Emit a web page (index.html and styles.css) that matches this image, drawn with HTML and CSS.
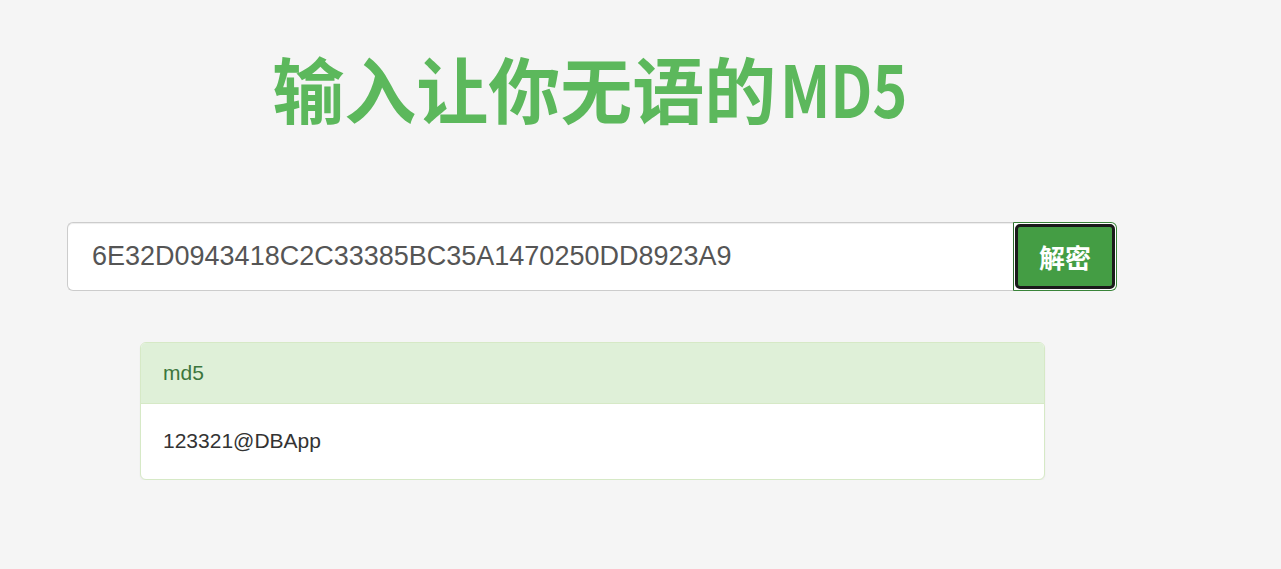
FILE: index.html
```html
<!DOCTYPE html>
<html lang="zh-CN">
<head>
<meta charset="utf-8">
<title>输入让你无语的MD5</title>
<link rel="stylesheet" href="styles.css">
</head>
<body>
<div class="wrap">
  <h1 class="title">输入让你无语的<span class="latin">MD5</span></h1>
  <form class="input-group">
    <input class="field" type="text" value="6E32D0943418C2C33385BC35A1470250DD8923A9">
    <button class="btn" type="button"><span class="btn-ring">解密</span></button>
  </form>
  <div class="panel">
    <div class="panel-heading">md5</div>
    <div class="panel-body">123321@DBApp</div>
  </div>
</div>
</body>
</html>
```
FILE: styles.css
```css
html, body {
  margin: 0;
  padding: 0;
}
body {
  background: #f5f5f5;
  font-family: "Liberation Sans", Arial, "Noto Sans CJK SC", sans-serif;
  color: #333;
}
.wrap {
  width: 1050px;
  margin-left: 67px;
  padding-top: 47px;
}
.title {
  margin: 0;
  text-align: center;
  font-family: "Noto Sans CJK SC", sans-serif;
  font-weight: 700;
  font-size: 72px;
  line-height: 79px;
  color: #5cb85c;
}
.title .latin {
  display: inline-block;
  transform: scaleX(0.82);
  transform-origin: 0 50%;
  margin-right: -24px;
  margin-left: 4px;
}
.input-group {
  display: flex;
  margin: 96px 0 0;
  height: 69px;
}
.field {
  flex: 1;
  min-width: 0;
  box-sizing: border-box;
  height: 69px;
  margin: 0;
  padding: 0 24px;
  border: 1px solid #ccc;
  border-right: 0;
  border-radius: 6px 0 0 6px;
  background: #fff;
  font-family: "Liberation Sans", Arial, sans-serif;
  font-size: 27px;
  color: #555;
  outline: none;
  box-shadow: inset 0 1px 1px rgba(0,0,0,.075);
}
.btn {
  box-sizing: border-box;
  width: 104px;
  height: 69px;
  margin: 0;
  padding: 0;
  border: 1px solid #398439;
  border-left-color: #2d6a2d;
  border-radius: 0 6px 6px 0;
  background: #fff;
  display: flex;
  cursor: pointer;
}
.btn-ring {
  flex: 1;
  margin: 1px;
  border: 3px solid #1a1a1a;
  border-radius: 5px;
  background: #449d44;
  color: #fff;
  font-family: "Noto Sans CJK SC", sans-serif;
  font-weight: 700;
  font-size: 26px;
  display: flex;
  align-items: center;
  justify-content: center;
}
.panel {
  margin: 51px 72px 0 73px;
  border: 1px solid #d6e9c6;
  border-radius: 6px;
  background: #fff;
  box-shadow: 0 1px 2px rgba(0,0,0,.05);
  overflow: hidden;
}
.panel-heading {
  background: #dff0d8;
  color: #3c763d;
  border-bottom: 1px solid #d6e9c6;
  padding: 15px 22px;
  font-size: 21px;
  line-height: 30px;
}
.panel-body {
  padding: 22px 22px 23px;
  font-size: 21px;
  line-height: 30px;
  color: #333;
}
```
